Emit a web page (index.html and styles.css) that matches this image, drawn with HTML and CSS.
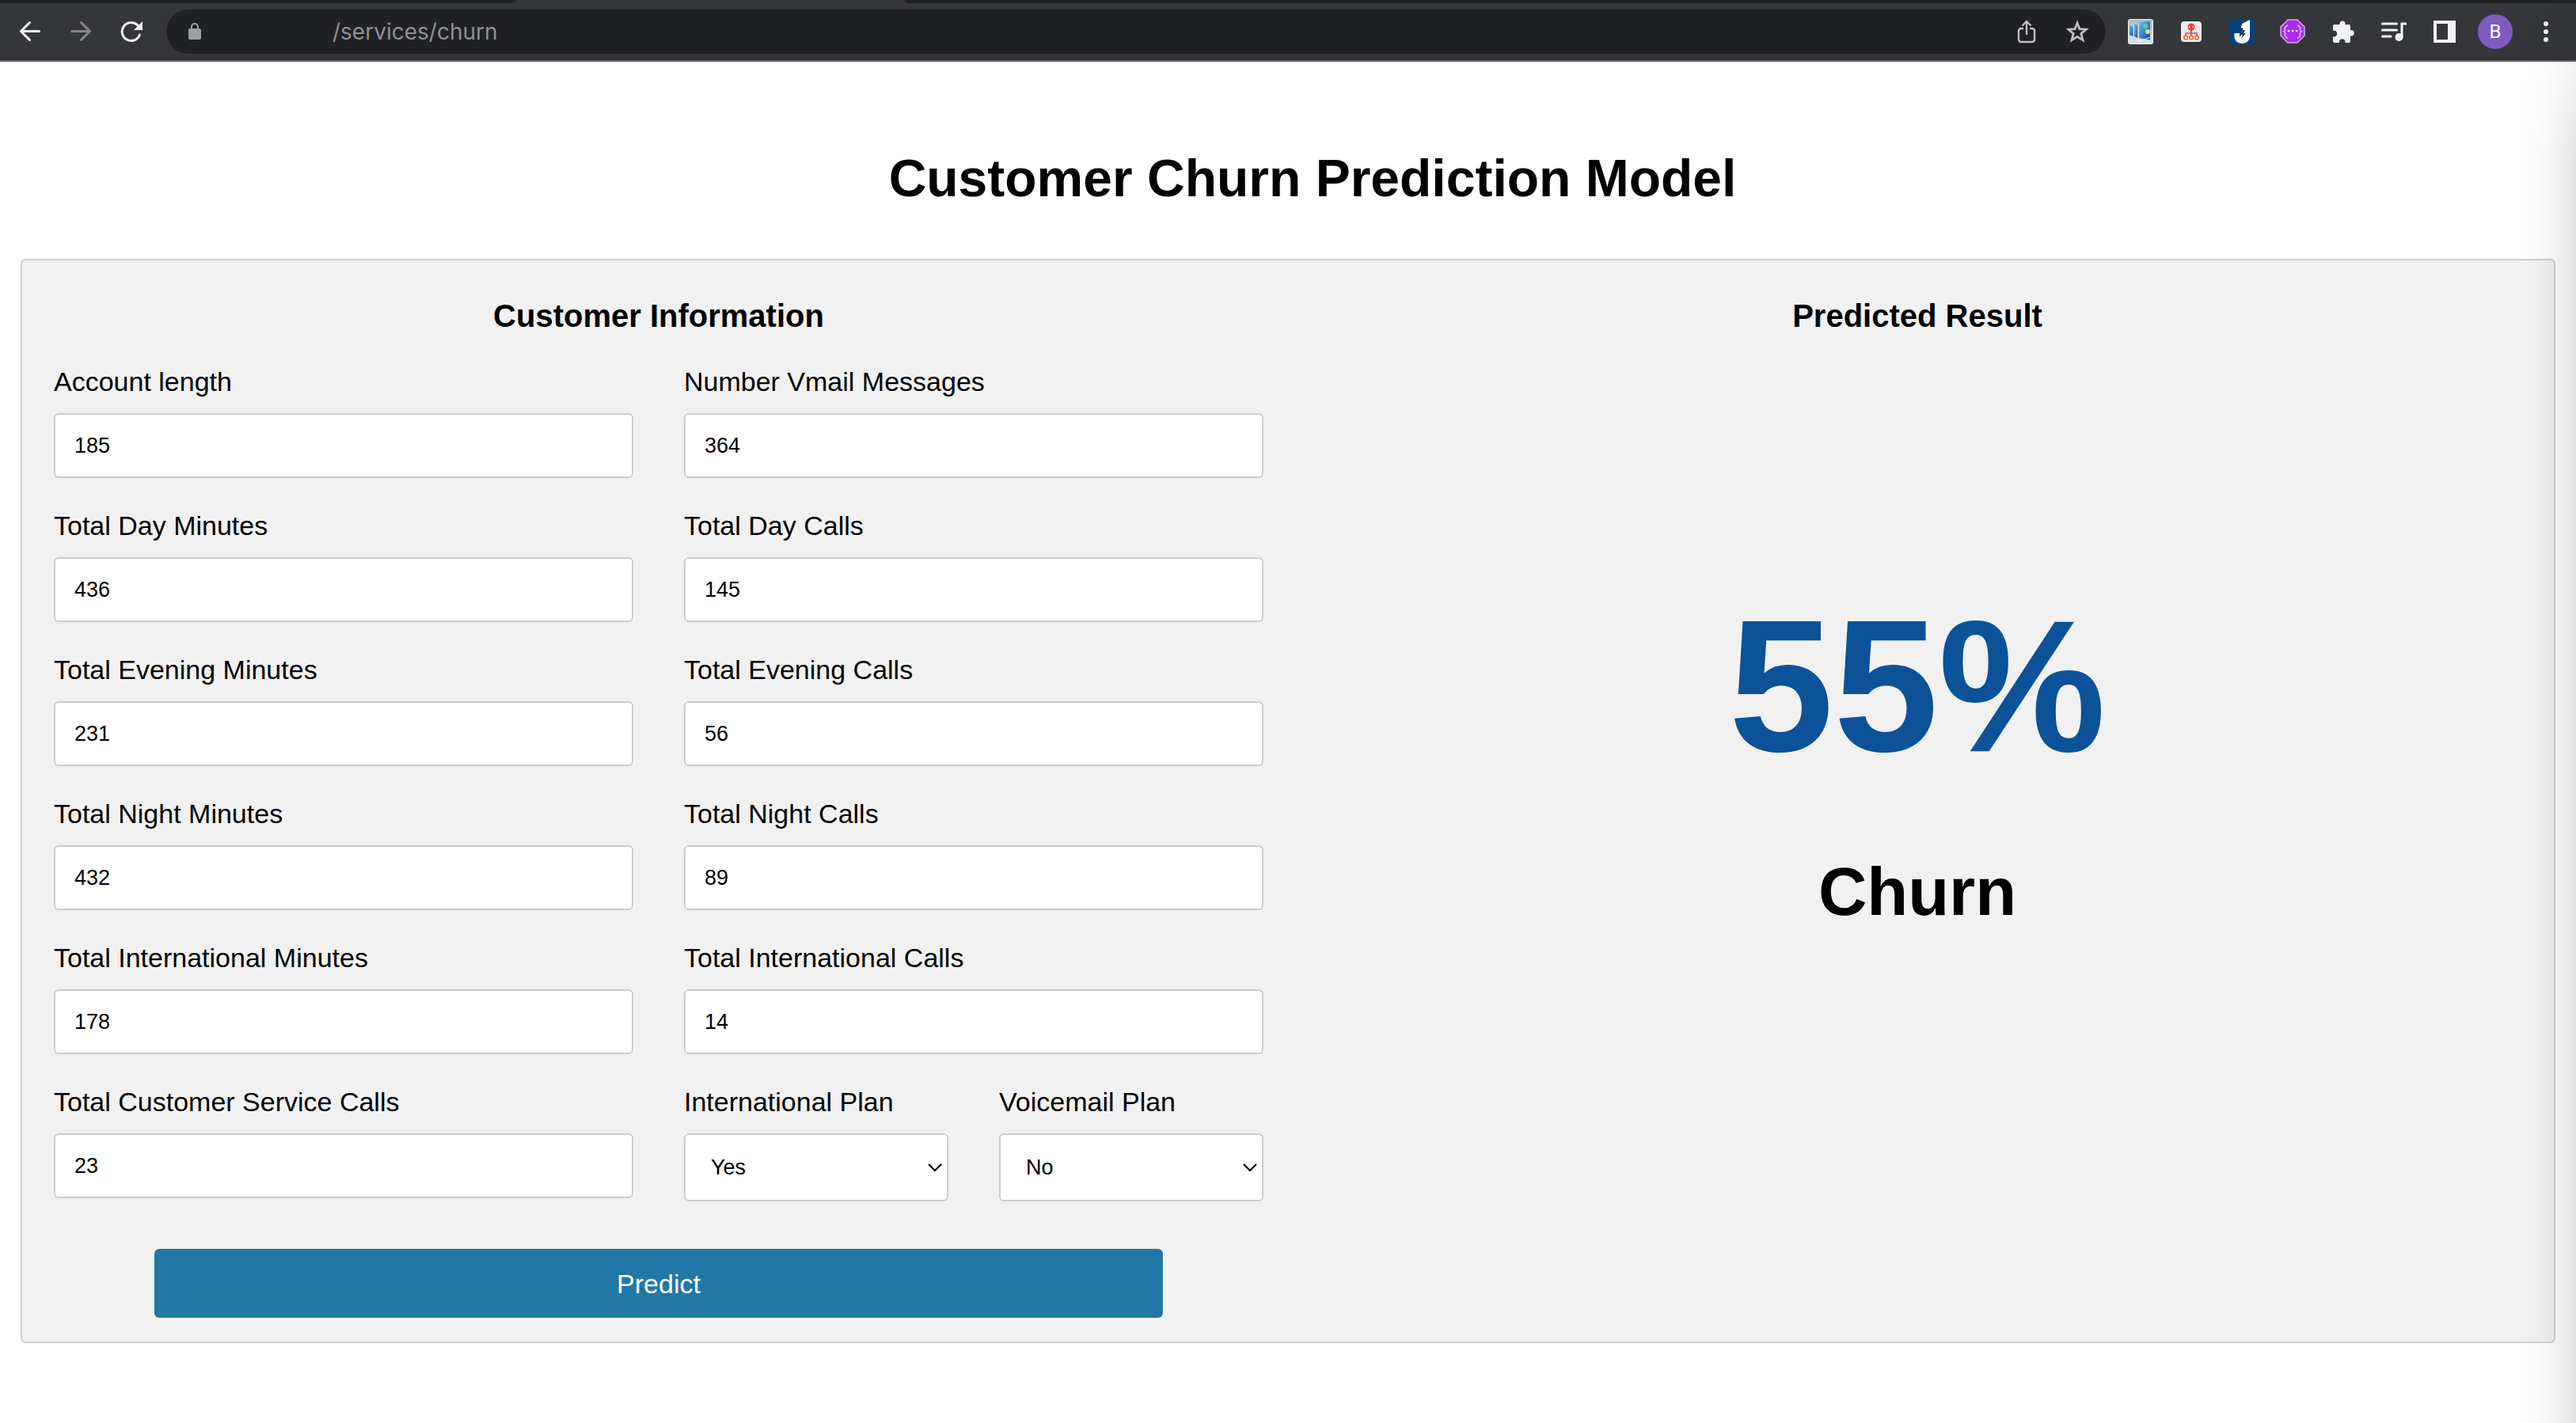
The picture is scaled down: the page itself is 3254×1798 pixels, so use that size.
FILE: index.html
```
<!DOCTYPE html>
<html lang="en">
<head>
<meta charset="utf-8">
<meta name="viewport" content="width=device-width, initial-scale=1">
<title>Customer Churn Prediction Model</title>
<link rel="stylesheet" href="styles.css">
</head>
<body>
<header class="browser">
  <div class="tabs"><span class="tab-left"></span><span class="tab-right"></span></div>
  <div class="toolbar">
    <nav class="tools">
      <button class="tool" type="button" aria-label="Back"><svg width="28" height="28" viewBox="0 0 28 28" fill="none" stroke="#f1f3f4" stroke-width="3" stroke-linecap="round" stroke-linejoin="round"><path d="M25.500 13.500H2.500M13.500 2.500l-11 11 11 11"/></svg></button>
      <button class="tool" type="button" aria-label="Forward"><svg width="28" height="28" viewBox="0 0 28 28" fill="none" stroke="#86878a" stroke-width="3" stroke-linecap="round" stroke-linejoin="round"><path d="M2.500 13.500h23M14.500 2.500l11 11-11 11"/></svg></button>
      <button class="tool" type="button" aria-label="Reload"><svg width="28" height="28" viewBox="0 0 28 28"><path d="M24.500 18A11.500 11.500 0 1 1 22 6" fill="none" stroke="#f1f3f4" stroke-width="3" stroke-linecap="round"/><path d="M28 1v11H17z" fill="#f1f3f4"/></svg></button>
    </nav>
    <div class="omnibox">
      <svg class="lock" width="16" height="22" viewBox="0 0 16 22"><rect y="7" width="16" height="14" rx="2" fill="#9aa0a6"/><path d="M4 8V5a4 4 0 0 1 8 0v3" fill="none" stroke="#9aa0a6" stroke-width="2"/></svg>
      <input class="url" type="text" aria-label="Address" value="/services/churn">
      <button class="tool" type="button" aria-label="Share"><svg width="24" height="30" viewBox="0 0 24 30" fill="none" stroke="#bdbec0" stroke-width="2.400"><path d="M8 11H5a3 3 0 0 0-3 3v11a3 3 0 0 0 3 3h14a3 3 0 0 0 3-3V14a3 3 0 0 0-3-3h-3M12 19V2.500M6.500 7.500 12 2l5.500 5.500"/></svg></button>
      <button class="tool" type="button" aria-label="Bookmark this page"><svg width="30" height="30" viewBox="0 0 30 30" fill="none" stroke="#bdbec0" stroke-width="2.800"><path d="M15 4l3 7.600 8.200.6-6.300 5.200 2.100 8.300L15 21.300l-7 4.400 2.100-8.300-6.300-5.200 8.200-.6z"/></svg></button>
    </div>
    <nav class="tools">
      <button class="tool" type="button" aria-label="Screens extension"><svg width="32" height="32" viewBox="0 0 32 32"><defs><linearGradient id="sky" x2="0" y2="1"><stop stop-color="#a9bcc2"/><stop offset="1" stop-color="#d5e9ee"/></linearGradient><linearGradient id="pane" x2="1" y2="1"><stop stop-color="#69c3ee"/><stop offset="1" stop-color="#1745a5"/></linearGradient></defs><rect x=".5" y=".5" width="31" height="31" rx="2" fill="url(#sky)" stroke="#e8f1f3"/><path d="M2 8l5 2v12l-5-2z" fill="url(#pane)"/><path d="M8 6l5 2v16l-5-2z" fill="url(#pane)"/><path d="M14 4l14-1.500v24L14 24z" fill="url(#pane)"/><path d="M7 9v13M13 7v17M14 28l15-5" stroke="#eefaff" fill="none"/><circle cx="22" cy="9" r="3.500" fill="#5cc39b"/><circle cx="25" cy="16" r="3" fill="#e7e26a"/></svg></button>
      <button class="tool" type="button" aria-label="Sitemap extension"><svg width="26" height="26" viewBox="0 0 26 26"><rect width="26" height="26" rx="4" fill="#ececec"/><circle cx="13" cy="7" r="4.500" fill="#ee3b30"/><path d="M11.500 5.500 10 7l1.500 1.500M14.500 5.500 16 7l-1.500 1.500" stroke="#fff" fill="none"/><path d="M13 11v7M6 18v-3h14v3" fill="none" stroke="#e8432d" stroke-width="1.600"/><g fill="#fff" stroke="#ee5a2a" stroke-width="1.500"><circle cx="6" cy="20.500" r="2.300"/><circle cx="13" cy="20.500" r="2.300"/><circle cx="20" cy="20.500" r="2.300"/></g></svg></button>
      <button class="tool" type="button" aria-label="Lightning extension"><svg width="32" height="32" viewBox="0 0 32 32"><rect width="32" height="32" rx="2" fill="#07427b"/><path d="M26 1v20c0 6-4 10-10 10-5.500 0-9-3.500-9.500-9V18H13v5l6-7h-3l2-4-3-1 1-5z" fill="#fff"/><path d="M17 14l-3 6h3l-2 5 6-7h-3l2-4z" fill="#07427b"/></svg></button>
      <button class="tool" type="button" aria-label="Braces extension"><svg width="32" height="32" viewBox="0 0 32 32"><path d="M10 1h12l9 9v11l-9 9H10l-9-9V10z" fill="#a92cec" stroke="#d8a8ee" stroke-width="1.500"/><path d="M10 8c-3 1-4 3-3.500 5S6 15 5 15.500c2 1 1.500 2 1.500 4s1 4 3.500 5M22 8c3 1 4 3 3.500 5s.5 2 1.500 2.500c-2 1-1.500 2-1.500 4s-1 4-3.500 5" fill="none" stroke="#e3b4fa" stroke-width="1.600"/><g fill="#fff"><circle cx="11" cy="15" r="1.300"/><circle cx="16" cy="15" r="1.300"/><circle cx="21" cy="15" r="1.300"/></g></svg></button>
      <button class="tool" type="button" aria-label="Extensions"><svg width="30" height="30" viewBox="0 0 30 30"><path d="M4 6h6.500V5a3.500 3.500 0 0 1 7 0v1H22a2 2 0 0 1 2 2v5h1a3.700 3.700 0 0 1 0 7.400h-1V27a2 2 0 0 1-2 2h-4.500v-1.500a3.800 3.800 0 0 0-7.500 0V29H4a2 2 0 0 1-2-2v-5.500h1a4 4 0 0 0 0-8H2V8a2 2 0 0 1 2-2z" fill="#f1f3f4"/></svg></button>
      <button class="tool" type="button" aria-label="Media controls"><svg width="32" height="26" viewBox="0 0 32 26"><path d="M1.500 3h18M1.500 11h18M1.500 19H12" stroke="#f1f3f4" stroke-width="3" stroke-linecap="round"/><path d="M26 20V3h6" fill="none" stroke="#f1f3f4" stroke-width="3"/><circle cx="22.500" cy="20" r="5" fill="#f1f3f4"/></svg></button>
      <button class="tool" type="button" aria-label="Side panel"><svg width="28" height="28" viewBox="0 0 28 28"><path d="M0 0h28v28H0zM4 4v20h14V4z" fill="#f1f3f4" fill-rule="evenodd"/></svg></button>
      <button class="tool" type="button" aria-label="Profile"><span class="avatar">B</span></button>
      <button class="tool" type="button" aria-label="Menu"><svg width="6" height="26" viewBox="0 0 6 26" fill="#f1f3f4"><circle cx="3" cy="3" r="3"/><circle cx="3" cy="13" r="3"/><circle cx="3" cy="23" r="3"/></svg></button>
    </nav>
  </div>
</header>
<main class="page">
  <h1 class="title">Customer Churn Prediction Model</h1>
  <div class="card">
    <form class="form">
      <h2 class="heading">Customer Information</h2>
      <div class="fields">
        <div class="field"><label for="account-length">Account length</label><input class="control" id="account-length" type="text" value="185"></div>
        <div class="field"><label for="vmail">Number Vmail Messages</label><input class="control" id="vmail" type="text" value="364"></div>
        <div class="field"><label for="day-minutes">Total Day Minutes</label><input class="control" id="day-minutes" type="text" value="436"></div>
        <div class="field"><label for="day-calls">Total Day Calls</label><input class="control" id="day-calls" type="text" value="145"></div>
        <div class="field"><label for="evening-minutes">Total Evening Minutes</label><input class="control" id="evening-minutes" type="text" value="231"></div>
        <div class="field"><label for="evening-calls">Total Evening Calls</label><input class="control" id="evening-calls" type="text" value="56"></div>
        <div class="field"><label for="night-minutes">Total Night Minutes</label><input class="control" id="night-minutes" type="text" value="432"></div>
        <div class="field"><label for="night-calls">Total Night Calls</label><input class="control" id="night-calls" type="text" value="89"></div>
        <div class="field"><label for="intl-minutes">Total International Minutes</label><input class="control" id="intl-minutes" type="text" value="178"></div>
        <div class="field"><label for="intl-calls">Total International Calls</label><input class="control" id="intl-calls" type="text" value="14"></div>
        <div class="field"><label for="service-calls">Total Customer Service Calls</label><input class="control" id="service-calls" type="text" value="23"></div>
        <div class="plans">
          <div class="field">
            <label for="intl-plan">International Plan</label>
            <div class="picker"><select class="control select" id="intl-plan"><option selected>Yes</option><option>No</option></select><svg class="chevron" width="18" height="12" viewBox="0 0 18 12" fill="none" stroke="#000" stroke-width="2"><path d="M1 2l8 8 8-8"/></svg></div>
          </div>
          <div class="field">
            <label for="vmail-plan">Voicemail Plan</label>
            <div class="picker"><select class="control select" id="vmail-plan"><option>Yes</option><option selected>No</option></select><svg class="chevron" width="18" height="12" viewBox="0 0 18 12" fill="none" stroke="#000" stroke-width="2"><path d="M1 2l8 8 8-8"/></svg></div>
          </div>
        </div>
      </div>
      <button class="predict" type="button">Predict</button>
    </form>
    <section class="result">
      <h2 class="heading">Predicted Result</h2>
      <p class="percent">55%</p>
      <p class="verdict">Churn</p>
    </section>
  </div>
</main>
<div class="edge-shade"></div>
</body>
</html>
```
FILE: styles.css
```
* {
  box-sizing: border-box;
}

body {
  position: relative;
  min-height: 100vh;
  margin: 0;
  background: #fff;
  color: #000;
  font-family: "Liberation Sans", Arial, sans-serif;
}

h1,
h2,
p {
  margin: 0;
}

/* Browser bar */

.browser {
  background: #35363a;
  border-bottom: 2px solid #5f6064;
}

.tabs {
  display: flex;
  gap: 492px;
  height: 4px;
}

.tab-left,
.tab-right {
  background: #202124;
}

.tab-left {
  width: 652px;
  border-bottom-right-radius: 8px;
}

.tab-right {
  flex: 1;
  border-bottom-left-radius: 8px;
}

.toolbar {
  display: flex;
  align-items: center;
  gap: 12px;
  height: 72px;
  padding: 0 6px;
}

.tools {
  display: flex;
}

.tool {
  display: flex;
  align-items: center;
  justify-content: center;
  width: 64px;
  height: 56px;
  padding: 0;
  border: 0;
  background: none;
}

.omnibox {
  display: flex;
  flex: 1;
  align-items: center;
  height: 56px;
  padding: 0 4px 0 28px;
  border-radius: 28px;
  background: #202124;
}

.lock {
  flex: none;
}

.url {
  flex: 1;
  min-width: 0;
  margin-left: 166px;
  padding: 0;
  border: 0;
  outline: 0;
  background: none;
  color: #8f9092;
  font: 28px/36px Inter, sans-serif;
}

.avatar {
  width: 44px;
  height: 44px;
  border-radius: 50%;
  background: #7e5bbf;
  color: #fff;
  font: 24px/44px Roboto, sans-serif;
  text-align: center;
}

/* Page */

.page {
  padding: 109px 26px 64px;
}

.title {
  padding-left: 62px;
  font-size: 66px;
  line-height: 76px;
  text-align: center;
}

.card {
  display: grid;
  grid-template-columns: minmax(0, 1fr) minmax(0, 1fr);
  gap: 62px;
  margin-top: 64px;
  padding: 47px 40px 30px;
  border: 2px solid #d0d0d0;
  border-radius: 6px;
  background: #f1f1f1;
}

.heading {
  font-size: 40px;
  line-height: 46px;
  text-align: center;
}

.fields {
  display: grid;
  grid-template-columns: 1fr 1fr;
  gap: 40px 64px;
  margin-top: 40px;
}

.plans {
  display: grid;
  grid-template-columns: 1fr 1fr;
  gap: 64px;
}

.field {
  display: flex;
  flex-direction: column;
  gap: 20px;
  font-size: 34px;
  line-height: 40px;
}

.control {
  width: 100%;
  height: 82px;
  padding: 0 24px;
  border: 2px solid #ccc;
  border-radius: 6px;
  background: #fff;
  color: #000;
  font: 27px/32px "Liberation Sans", Arial, sans-serif;
}

.picker {
  display: grid;
  align-items: center;
}

.select {
  grid-area: 1 / 1;
  height: 86px;
  padding: 0 32px;
  appearance: none;
}

.chevron {
  grid-area: 1 / 1;
  justify-self: end;
  margin-right: 8px;
  pointer-events: none;
}

.predict {
  display: block;
  width: 83.333%;
  height: 87px;
  margin: 60px auto 0;
  border: 0;
  border-radius: 6px;
  background: #2377a5;
  color: #fff;
  font: 34px/40px "Liberation Sans", Arial, sans-serif;
}

.result {
  text-align: center;
}

.percent {
  margin-top: 311px;
  color: #0b5299;
  font-size: 238px;
  font-weight: bold;
  line-height: 268px;
}

.verdict {
  margin-top: 78px;
  font-size: 85px;
  font-weight: bold;
  line-height: 96px;
}

/* Shade along the window's right edge */

.edge-shade {
  position: absolute;
  top: 0;
  right: 0;
  bottom: 0;
  width: 72px;
  background: linear-gradient(to right, transparent, rgba(0, 0, 0, 0.02) 40%, rgba(0, 0, 0, 0.06) 70%, rgba(0, 0, 0, 0.11));
  mask-image: linear-gradient(to bottom, transparent, #000 200px);
  pointer-events: none;
}
```
